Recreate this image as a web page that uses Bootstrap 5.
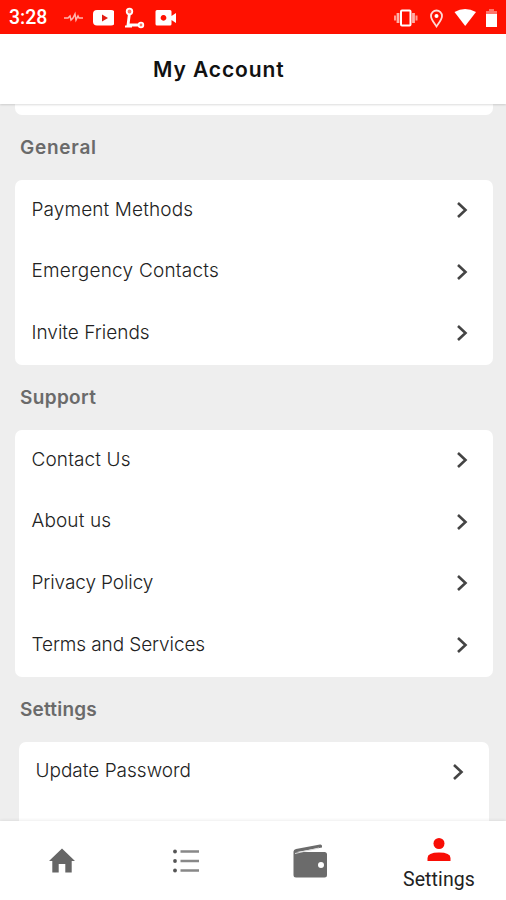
<!DOCTYPE html>
<html lang="en">
<head>
<meta charset="utf-8">
<meta name="viewport" content="width=device-width, initial-scale=1">
<title>My Account</title>
<link href="https://cdn.jsdelivr.net/npm/bootstrap@5.3.0/dist/css/bootstrap.min.css" rel="stylesheet">
<style>
body{font-family:Inter,Lato,sans-serif;background:#eee;height:900px;overflow:hidden;color:#222}
.status-bar{height:34px;background:#ff1100;color:#fff;padding:1px 7px 0 9px}
.clock{font:500 19.5px/34px Roboto,sans-serif;width:53px}
.title-bar{height:70px;box-shadow:0 1px 2px rgba(0,0,0,.14);z-index:2}
.title-bar h1{font-size:21px;font-weight:600;letter-spacing:.9px;line-height:71px;padding-left:153px;color:#111}
.panel{border:0;border-radius:7px;margin:0 13.5px 0 14.5px;background:#fff}
.panel-tail{height:11px;border-radius:0 0 7px 7px}
.section-title{height:65px;font-size:19px;font-weight:600;line-height:65px;letter-spacing:.2px;padding-left:20px;color:#6a6a6a}
.section-title.track-wide{letter-spacing:.75px}
.section-title.track-mid{letter-spacing:.35px}
.menu-row{height:61.7px;padding:0 25px 2px 17px;background:none;border:0;color:#222;font-size:19px;font-weight:300}
.menu-row svg{width:12px;height:18px}
.menu-row .track-open{letter-spacing:.22px}
.menu-row .track-mid{letter-spacing:.12px}
.menu-row .track-tight{letter-spacing:-.1px}
.panel-inset{margin:0 17.5px 0 18.5px;height:90px;border-radius:7px 7px 0 0}
.tab-bar{height:79px;background:#fff;box-shadow:0 -1px 3px rgba(0,0,0,.07);z-index:2}
.tab-bar .tab{width:124px;color:#666}
.tab-label{font:400 19.5px/22px Roboto,sans-serif;letter-spacing:.1px;color:#222;margin-top:6px}
</style>
</head>
<body class="d-flex flex-column">
<header class="status-bar d-flex align-items-center flex-shrink-0">
  <span class="clock">3:28</span>
  <svg width="22" height="34" viewBox="62 0 22 34" fill="none" stroke="#ffb5ae" stroke-width="1.5"><path d="M64 17h4l2-2 1 4 2-2 2-4 1 6 2-4 1 2h4"/></svg>
  <svg width="30" height="34" viewBox="84 0 30 34"><rect x="93" y="9" width="22" height="15.500" rx="4" fill="#fff"/><path d="M102 13.500l6 3.500-6 3.500z" fill="#e21b12"/></svg>
  <svg width="36" height="34" viewBox="114 0 36 34" fill="none" stroke="#fff"><path d="M129.500 12l-1.500 12h11" stroke-width="2.800"/><circle cx="129.500" cy="10.500" r="2.800" fill="#ff7566" stroke-width="1.800"/><circle cx="141" cy="24" r="2.300" fill="#ff7566" stroke-width="1.800"/><path d="M125 25.500h7" stroke-width="2"/></svg>
  <svg width="28" height="34" viewBox="150 0 28 34" fill="#fff"><path fill-rule="evenodd" d="M157 9h13q1.500 0 1.500 1.500V15l4.500-3v10l-4.500-3v4q0 1.500-1.500 1.500h-13q-1.500 0-1.500-1.500V10.500Q155.500 9 157 9zM163.500 14a2.900 2.900 0 1 0 .01 0z"/></svg>
  <svg class="ms-auto" width="26" height="34" viewBox="394 0 26 34" fill="none" stroke="#fff"><rect x="402" y="9.500" width="9.500" height="15" rx="1" stroke-width="2"/><path d="M399 12v10M414.500 12v10" stroke-width="2.800" stroke="#ffb0a8"/><path d="M396 14.500v5M417.500 14.500v5" stroke-width="2" stroke="#ff9c92"/></svg>
  <svg width="30" height="34" viewBox="420 0 30 34"><path d="M437.500 25.500c-2-3-5.500-7-5.500-10.500a5.500 5.500 0 0 1 11 0c0 3.500-3.500 7.500-5.500 10.500z" fill="none" stroke="#ffd9d5" stroke-width="1.800"/><circle cx="437.500" cy="15" r="2" fill="#fff"/></svg>
  <svg width="50" height="34" viewBox="450 0 50 34"><path d="M455.500 11q10.500-6 21.500 0L466.200 25z" fill="#fff"/><path d="M490 8h5v2h3v4h-11v-4h3z" fill="#ff756b"/><path d="M487 13h11v13h-11z" fill="#fff"/></svg>
</header>
<div class="title-bar bg-white position-relative flex-shrink-0"><h1 class="m-0">My Account</h1></div>
<main class="flex-grow-1 overflow-hidden">
  <div class="panel panel-tail"></div>
  <h2 class="section-title track-wide m-0">General</h2>
  <div class="panel list-group">
    <a class="menu-row list-group-item d-flex align-items-center justify-content-between"><span class="track-mid">Payment Methods</span><svg viewBox="0 0 12 18"><path d="M2 2l7.500 7L2 16" fill="none" stroke="#444" stroke-width="2.600"/></svg></a>
    <a class="menu-row list-group-item d-flex align-items-center justify-content-between"><span class="track-open">Emergency Contacts</span><svg viewBox="0 0 12 18"><path d="M2 2l7.500 7L2 16" fill="none" stroke="#444" stroke-width="2.600"/></svg></a>
    <a class="menu-row list-group-item d-flex align-items-center justify-content-between"><span>Invite Friends</span><svg viewBox="0 0 12 18"><path d="M2 2l7.500 7L2 16" fill="none" stroke="#444" stroke-width="2.600"/></svg></a>
  </div>
  <h2 class="section-title track-mid m-0">Support</h2>
  <div class="panel list-group">
    <a class="menu-row list-group-item d-flex align-items-center justify-content-between"><span class="track-mid">Contact Us</span><svg viewBox="0 0 12 18"><path d="M2 2l7.500 7L2 16" fill="none" stroke="#444" stroke-width="2.600"/></svg></a>
    <a class="menu-row list-group-item d-flex align-items-center justify-content-between"><span class="track-mid">About us</span><svg viewBox="0 0 12 18"><path d="M2 2l7.500 7L2 16" fill="none" stroke="#444" stroke-width="2.600"/></svg></a>
    <a class="menu-row list-group-item d-flex align-items-center justify-content-between"><span class="track-tight">Privacy Policy</span><svg viewBox="0 0 12 18"><path d="M2 2l7.500 7L2 16" fill="none" stroke="#444" stroke-width="2.600"/></svg></a>
    <a class="menu-row list-group-item d-flex align-items-center justify-content-between"><span class="track-tight">Terms and Services</span><svg viewBox="0 0 12 18"><path d="M2 2l7.500 7L2 16" fill="none" stroke="#444" stroke-width="2.600"/></svg></a>
  </div>
  <h2 class="section-title m-0">Settings</h2>
  <div class="panel panel-inset list-group">
    <a class="menu-row list-group-item d-flex align-items-center justify-content-between"><span>Update Password</span><svg viewBox="0 0 12 18"><path d="M2 2l7.500 7L2 16" fill="none" stroke="#444" stroke-width="2.600"/></svg></a>
  </div>
</main>
<nav class="tab-bar d-flex flex-shrink-0 position-relative">
  <a class="tab d-flex align-items-center justify-content-center"><svg width="28" height="28" viewBox="0 0 28 28" fill="#666"><path d="M14 1.500L27 14h-3.300v11.500h-6.400V17h-6.600v8.500H4.300V14H1z"/></svg></a>
  <a class="tab d-flex align-items-center justify-content-center"><svg width="28" height="28" viewBox="0 0 28 28" fill="none" stroke="#888"><path d="M8.500 4.500H27M8.500 14H27M8.500 23.500H27" stroke-width="2.400"/><g fill="#555" stroke="none"><circle cx="3" cy="4.500" r="1.900"/><circle cx="3" cy="14" r="1.900"/><circle cx="3" cy="23.500" r="1.900"/></g></svg></a>
  <a class="tab d-flex align-items-center justify-content-center"><svg width="36" height="36" viewBox="0 0 36 36"><path d="M1.500 32V8.500q0-2 2.500-2.500L28 1.500q2-.3 2 1.500v1.500L5 9h27.500q2.500 0 2.500 2.500v20.500q0 2.500-2.500 2.500H4Q1.500 34.500 1.500 32z" fill="#6b6b6b"/><path d="M3 10.500L27 5" stroke="#ddd" fill="none"/><circle cx="29" cy="22" r="3" fill="#fff"/></svg></a>
  <a class="tab flex-grow-1 d-flex flex-column align-items-center text-decoration-none"><svg width="26" height="26" viewBox="0 0 26 26" class="mt-3" fill="#f80d05"><circle cx="13" cy="6.500" r="5.500"/><path d="M1.500 24v-3q0-5.500 11.500-5.500T24.500 21v3z"/></svg><span class="tab-label">Settings</span></a>
</nav>
<script src="https://cdn.jsdelivr.net/npm/bootstrap@5.3.0/dist/js/bootstrap.bundle.min.js"></script>
</body>
</html>
